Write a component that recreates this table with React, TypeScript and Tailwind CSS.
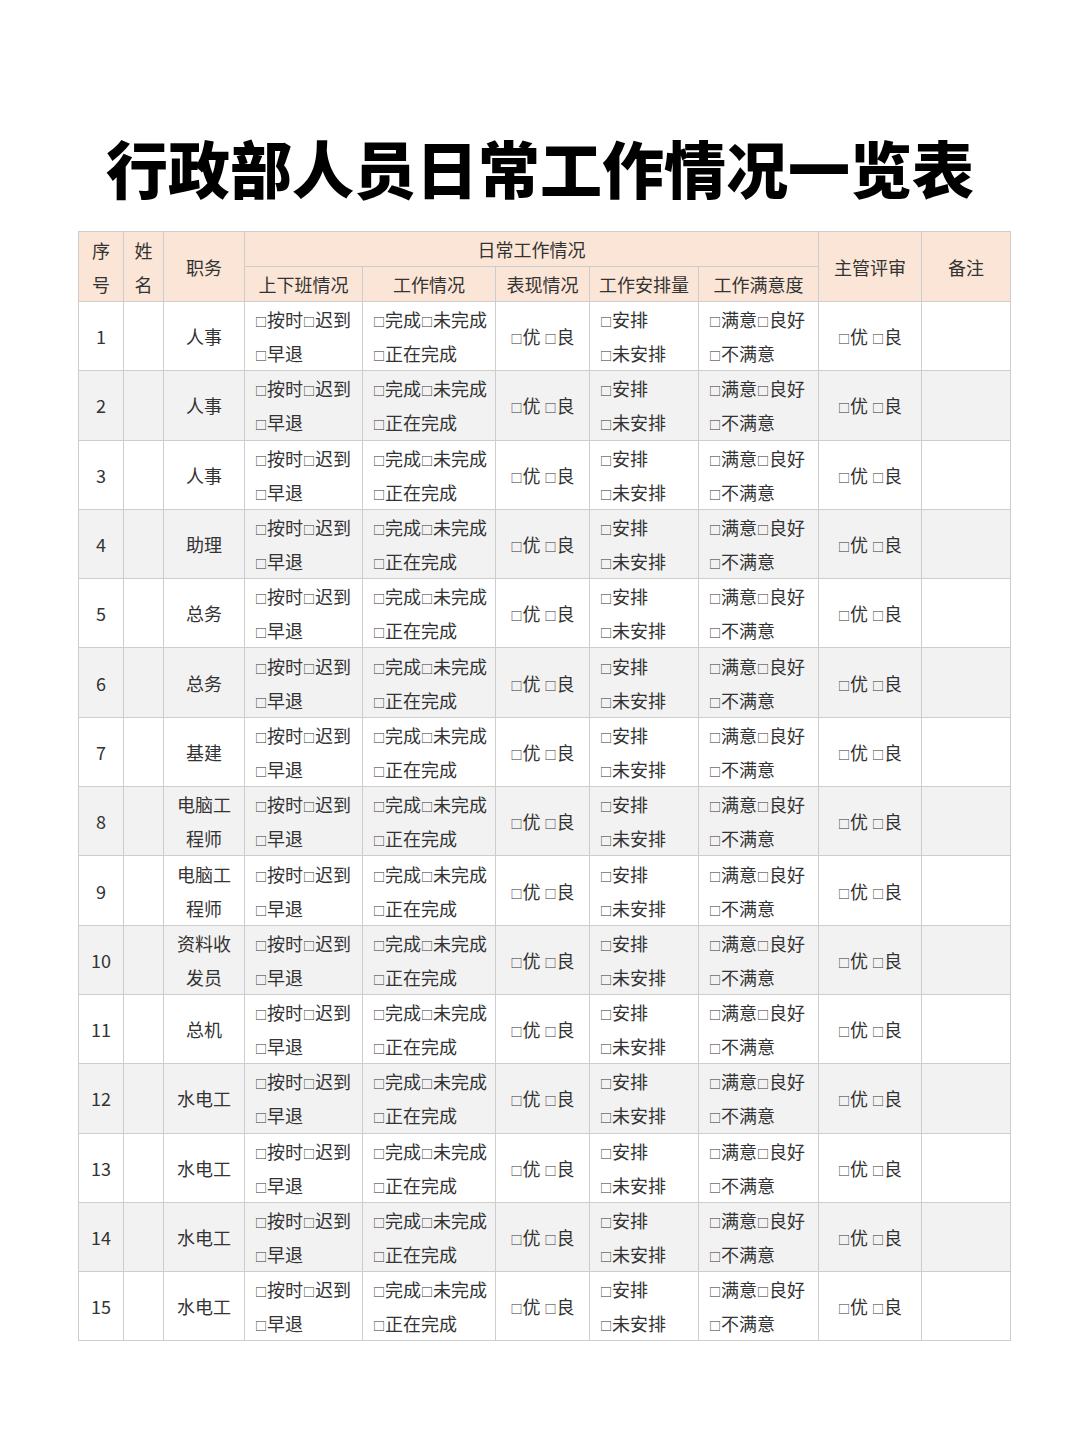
const rows: { no: number; role: string[] }[] = [
  { no: 1, role: ["人事"] },
  { no: 2, role: ["人事"] },
  { no: 3, role: ["人事"] },
  { no: 4, role: ["助理"] },
  { no: 5, role: ["总务"] },
  { no: 6, role: ["总务"] },
  { no: 7, role: ["基建"] },
  { no: 8, role: ["电脑工", "程师"] },
  { no: 9, role: ["电脑工", "程师"] },
  { no: 10, role: ["资料收", "发员"] },
  { no: 11, role: ["总机"] },
  { no: 12, role: ["水电工"] },
  { no: 13, role: ["水电工"] },
  { no: 14, role: ["水电工"] },
  { no: 15, role: ["水电工"] },
];

function Box() {
  return <span className="text-[12px] leading-none">□</span>;
}

function Opts({ items }: { items: string[] }) {
  return (
    <>
      {items.map((t) => (
        <span key={t}>
          <Box />
          {t}
        </span>
      ))}
    </>
  );
}

const th = "border border-[#cdcdcd] font-normal text-center leading-[34px] p-0";
const td = "border border-[#cdcdcd] leading-[34px] p-0";

export default function App() {
  return (
    <div
      className="w-[1080px] h-[1439px] bg-white text-[#333333]"
      style={{ fontFamily: '"Noto Sans CJK SC", "Noto Sans", sans-serif' }}
    >
      <div className="pt-[126px] h-[231px]">
        <h1 className="text-center text-[62px] leading-[82px] font-black text-black">
          行政部人员日常工作情况一览表
        </h1>
      </div>
      <table className="ml-[78px] w-[932px] table-fixed border-collapse text-[18px]">
        <colgroup>
          <col className="w-[45px]" />
          <col className="w-[40px]" />
          <col className="w-[81px]" />
          <col className="w-[118px]" />
          <col className="w-[133px]" />
          <col className="w-[94px]" />
          <col className="w-[109px]" />
          <col className="w-[120px]" />
          <col className="w-[103px]" />
          <col className="w-[89px]" />
        </colgroup>
        <thead className="bg-[#fbe5d6]">
          <tr className="h-[35px]">
            <th rowSpan={2} className={th}>
              <div>序</div>
              <div>号</div>
            </th>
            <th rowSpan={2} className={th}>
              <div>姓</div>
              <div>名</div>
            </th>
            <th rowSpan={2} className={th}>职务</th>
            <th colSpan={5} className={th}>日常工作情况</th>
            <th rowSpan={2} className={th}>主管评审</th>
            <th rowSpan={2} className={th}>备注</th>
          </tr>
          <tr className="h-[34px]">
            <th className={th}>上下班情况</th>
            <th className={th}>工作情况</th>
            <th className={th}>表现情况</th>
            <th className={th}>工作安排量</th>
            <th className={th}>工作满意度</th>
          </tr>
        </thead>
        <tbody>
          {rows.map((r) => (
            <tr
              key={r.no}
              className={`h-[69.3px] ${r.no % 2 === 0 ? "bg-[#f2f2f2]" : "bg-white"}`}
            >
              <td className={`${td} text-center`}>{r.no}</td>
              <td className={td}></td>
              <td className={`${td} text-center`}>
                {r.role.map((x) => (
                  <div key={x}>{x}</div>
                ))}
              </td>
              <td className={`${td} pl-[10px]`}>
                <div>
                  <Opts items={["按时", "迟到"]} />
                </div>
                <div>
                  <Opts items={["早退"]} />
                </div>
              </td>
              <td className={`${td} pl-[10px]`}>
                <div>
                  <Opts items={["完成", "未完成"]} />
                </div>
                <div>
                  <Opts items={["正在完成"]} />
                </div>
              </td>
              <td className={`${td} text-center`}>
                <Box />优 <Box />良
              </td>
              <td className={`${td} pl-[10px]`}>
                <div>
                  <Opts items={["安排"]} />
                </div>
                <div>
                  <Opts items={["未安排"]} />
                </div>
              </td>
              <td className={`${td} pl-[10px]`}>
                <div>
                  <Opts items={["满意", "良好"]} />
                </div>
                <div>
                  <Opts items={["不满意"]} />
                </div>
              </td>
              <td className={`${td} text-center`}>
                <Box />优 <Box />良
              </td>
              <td className={td}></td>
            </tr>
          ))}
        </tbody>
      </table>
    </div>
  );
}
